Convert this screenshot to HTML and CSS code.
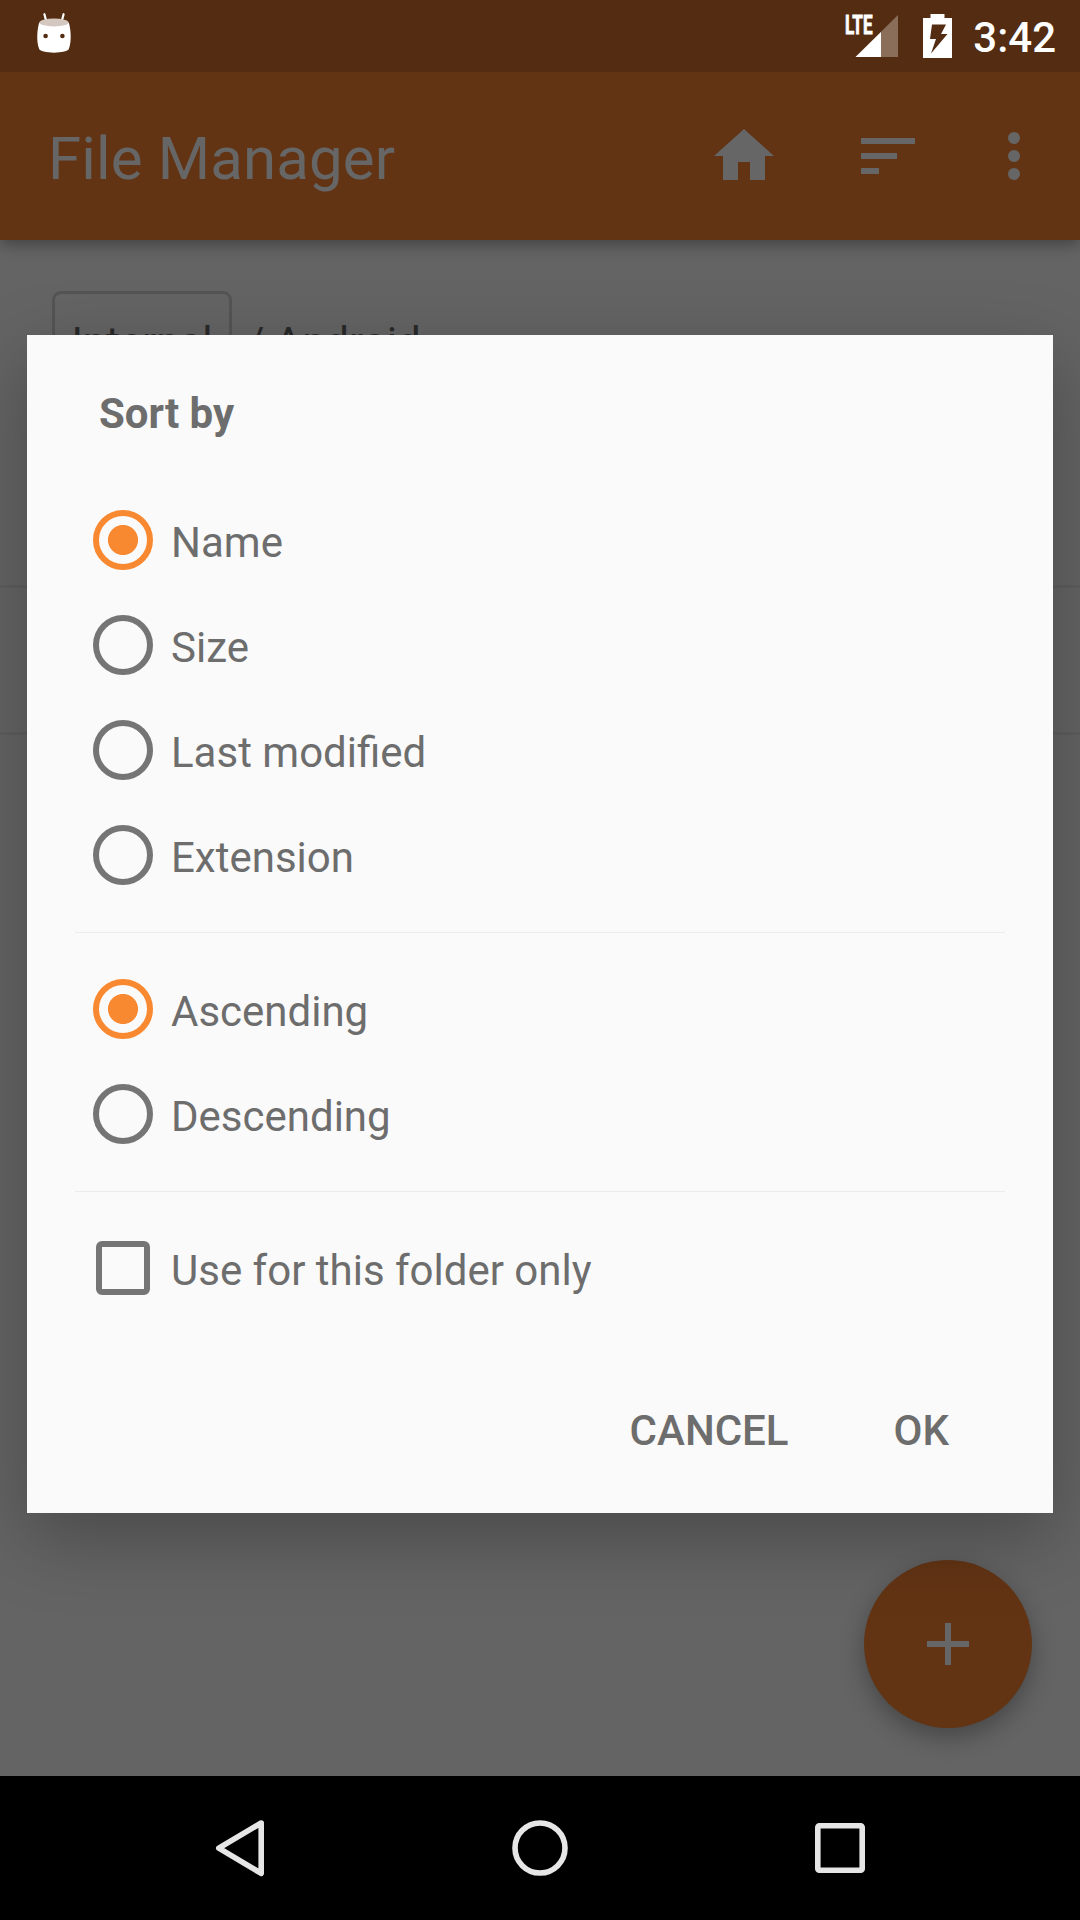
FILE: index.html
```html
<!DOCTYPE html>
<html lang="en">
<head>
<meta charset="utf-8">
<title>File Manager</title>
<link rel="stylesheet" href="styles.css">
</head>
<body>
<div class="screen">
  <header class="status-bar">
    <svg class="robot" width="36" height="44" viewBox="0 0 36 44">
      <path d="M8.4 2.2L10.2 9M27.6 2.2L25.8 9" stroke="#fff" stroke-width="2.2" stroke-linecap="round"/>
      <path d="M3.2 10.5C1.2 17 .2 29 3 36.500C3.700 42 32.300 42 33 36.500C35.800 29 34.800 17 32.800 10.500C27 14.500 9 14.500 3.200 10.500Z" fill="#fff"/>
      <ellipse cx="18" cy="10.500" rx="14.600" ry="3.900" fill="#d3c7bf"/>
      <circle cx="9.600" cy="24" r="2.300" fill="#532c12"/>
      <circle cx="26.400" cy="24" r="2.300" fill="#532c12"/>
    </svg>
    <div class="status-right">
      <svg class="signal" width="54" height="46" viewBox="0 0 54 46">
        <path d="M53 2V44H10.500Z" fill="#8a6e5a"/>
        <path d="M36 19V44H10.500Z" fill="#fff"/>
        <text class="network" x="0" y="20.500" textLength="27.500" lengthAdjust="spacingAndGlyphs">LTE</text>
      </svg>
      <svg class="battery" width="29" height="44" viewBox="0 0 29 44">
        <path d="M0 4H7.500V0H21.500V4H29V44H0Z" fill="#fff"/>
        <path d="M9 10.500H23L18 20H24.500L8 39.500L13 25H7Z" fill="#532c12"/>
      </svg>
      <span class="clock">3:42</span>
    </div>
  </header>

  <div class="app-bar">
    <h1 class="app-title">File Manager</h1>
    <div class="actions">
      <svg width="72" height="72" viewBox="0 0 24 24"><path d="M10 20v-6h4v6h5v-8h3L12 3 2 12h3v8z"/></svg>
      <svg width="72" height="72" viewBox="0 0 24 24"><path d="M3 18h6v-2H3v2zM3 6v2h18V6H3zm0 7h12v-2H3v2z"/></svg>
      <svg class="more" width="72" height="72" viewBox="0 0 24 24"><circle cx="12" cy="6" r="2"/><circle cx="12" cy="12" r="2"/><circle cx="12" cy="18" r="2"/></svg>
    </div>
  </div>

  <main class="content">
    <nav class="breadcrumb"><span class="crumb-button">Internal</span><span class="crumb-path">/ Android</span></nav>
    <div class="file-row file-row-first"></div>
    <div class="file-row"></div>
    <div class="fab"><svg width="72" height="72" viewBox="0 0 24 24"><path d="M19 13h-6v6h-2v-6H5v-2h6V5h2v6h6z"/></svg></div>
  </main>

  <footer class="nav-bar">
    <svg width="60" height="60" viewBox="0 0 60 60"><path d="M51.200 5L8.800 30.200L51.200 55.400Z"/></svg>
    <svg width="60" height="60" viewBox="0 0 60 60"><circle cx="30" cy="30" r="25"/></svg>
    <svg width="60" height="60" viewBox="0 0 60 60"><rect x="7.800" y="7.800" width="44.400" height="44.400" rx="1.500"/></svg>
  </footer>

  <section class="dialog">
    <h2 class="dialog-title">Sort by</h2>
    <div class="options">
      <label class="option"><span class="radio checked"></span>Name</label>
      <label class="option"><span class="radio"></span>Size</label>
      <label class="option"><span class="radio"></span>Last modified</label>
      <label class="option"><span class="radio"></span>Extension</label>
    </div>
    <hr class="divider">
    <div class="options">
      <label class="option"><span class="radio checked"></span>Ascending</label>
      <label class="option"><span class="radio"></span>Descending</label>
    </div>
    <hr class="divider">
    <div class="options">
      <label class="option"><span class="checkbox"></span>Use for this folder only</label>
    </div>
    <div class="dialog-buttons"><span>CANCEL</span><span>OK</span></div>
  </section>
</div>
</body>
</html>
```
FILE: styles.css
```css
* { box-sizing: border-box; }

body {
  margin: 0;
  font-family: Roboto, sans-serif;
}

.screen {
  position: relative;
  width: 1080px;
  height: 1920px;
  overflow: hidden;
  display: flex;
  flex-direction: column;
  background: #646464;
}

.status-bar {
  position: relative;
  z-index: 1;
  height: 72px;
  flex: none;
  display: flex;
  justify-content: space-between;
  align-items: flex-start;
  padding: 12px 24px 0 36px;
  background: #532c12;
}

.status-right {
  display: flex;
  align-items: flex-start;
}

.status-right .signal {
  margin-top: 1px;
  overflow: visible;
}

.status-right .battery {
  margin: 2px 0 0 24px;
}

.network {
  font: 700 25px Roboto, sans-serif;
  fill: #fff;
  stroke: #fff;
  stroke-width: .8px;
}

.clock {
  margin: 1px 0 0 21px;
  font-size: 42px;
  font-weight: 500;
  line-height: 50px;
  color: #fff;
}

.app-bar {
  height: 168px;
  flex: none;
  display: flex;
  justify-content: space-between;
  align-items: center;
  padding: 0 30px 0 48px;
  background: #623414;
  box-shadow: 0 5px 14px rgba(0, 0, 0, .32);
}

.app-title {
  margin: 6px 0 0;
  font-size: 60px;
  font-weight: 400;
  line-height: 70px;
  letter-spacing: .12px;
  color: #666;
}

.actions {
  display: flex;
  gap: 72px;
}

.actions svg, .fab svg { fill: #666; }

.actions .more { margin-left: -18px; }

.content {
  flex: 1;
  display: flex;
  flex-direction: column;
  padding-top: 51px;
}

.breadcrumb {
  height: 131px;
  flex: none;
  display: flex;
  align-items: flex-start;
  padding-left: 52px;
  gap: 15px;
  font-size: 42px;
  line-height: 50px;
  color: #292929;
}

.crumb-button {
  width: 180px;
  height: 112px;
  padding-top: 24px;
  display: flex;
  justify-content: center;
  border: 3px solid #545454;
  border-radius: 9px;
}

.crumb-path { padding-top: 27px; }

.file-row {
  height: 147px;
  flex: none;
  border-bottom: 3px solid #5e5e5e;
}

.file-row-first { height: 166px; }

.fab {
  width: 168px;
  height: 168px;
  margin: auto 48px 48px auto;
  display: flex;
  align-items: center;
  justify-content: center;
  border-radius: 50%;
  background: #623414;
  box-shadow: 0 9px 24px rgba(0, 0, 0, .3);
}

.nav-bar {
  height: 144px;
  flex: none;
  display: flex;
  align-items: center;
  justify-content: center;
  gap: 240px;
  background: #000;
}

.nav-bar svg {
  fill: none;
  stroke: #e6e6e6;
  stroke-width: 5.6;
  stroke-linejoin: round;
}

/* Overlays the dimmed file list */
.dialog {
  position: absolute;
  z-index: 2;
  top: 335px;
  left: 27px;
  width: 1026px;
  height: 1178px;
  padding: 54px 48px 0;
  background: #fafafa;
  color: #6d6d6d;
  font-size: 42px;
  line-height: 50px;
  box-shadow: 0 24px 70px rgba(0, 0, 0, .27);
}

.dialog-title {
  margin: 0 0 53px;
  padding-left: 24px;
  font-size: 42px;
  font-weight: 700;
  line-height: 50px;
}

.options {
  display: flex;
  flex-direction: column;
  gap: 9px;
  padding-left: 18px;
}

.option {
  height: 96px;
  display: flex;
  align-items: center;
  gap: 18px;
  padding-top: 6px;
}

.radio {
  width: 60px;
  height: 60px;
  margin-top: -6px;
  border: 6px solid #757575;
  border-radius: 50%;
}

.radio.checked {
  border-color: #f98930;
  background: radial-gradient(circle, #f98930 14.600px, transparent 15.400px);
}

.checkbox {
  width: 54px;
  height: 54px;
  margin: -6px 3px 0;
  border: 6px solid #757575;
  border-radius: 6px;
}

.divider {
  height: 1px;
  margin: 29px 0 28px;
  border: 0;
  background: #ececec;
}

.dialog-buttons {
  display: flex;
  justify-content: flex-end;
  gap: 105px;
  margin-top: 90px;
  padding-right: 56px;
  font-weight: 500;
}
```
